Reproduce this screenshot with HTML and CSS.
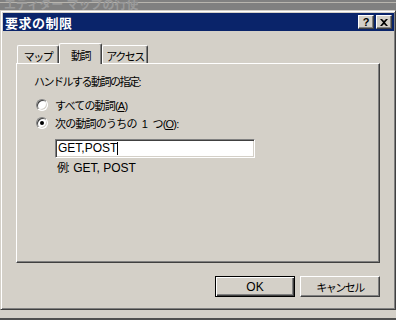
FILE: index.html
```html
<!DOCTYPE html>
<html lang="ja">
<head>
    <meta charset="UTF-8" />
    <title>要求の制限</title>
    <link rel="stylesheet" href="styles.css">
</head>
<body>
    <div class="behind">
        <span class="ghost-title">エディター マップの行使</span>
    </div>

    <div class="window">
        <div class="titlebar">
            <span class="title">要求の制限</span>
            <div class="caption-buttons">
                <span class="cap-btn">?</span>
                <span class="cap-btn">
                    <svg width="8" height="7" viewBox="0 0 8 7">
                        <path d="M0 0h2l2 2 2-2h2L5 3.5 8 7H6L4 5 2 7H0l3-3.5z" fill="#000"/>
                    </svg>
                </span>
            </div>
        </div>

        <div class="client">
            <div class="tabs">
                <div class="tab ja tab-map">マップ</div>
                <div class="tab ja tab-verbs active">動詞</div>
                <div class="tab ja tab-access">アクセス</div>
            </div>

            <div class="panel">
                <div class="label ja">ハンドルする動詞の指定:</div>
                <div class="option">
                    <span class="radio"></span>
                    <span class="ja loose">すべての動詞(<u>A</u>)</span>
                </div>
                <div class="option">
                    <span class="radio checked"></span>
                    <span class="ja loose">次の動詞のうちの 1 つ(<u>O</u>):</span>
                </div>
                <div class="textbox">GET,POST<span class="caret"></span></div>
                <div class="hint"><span class="ja">例</span>: GET, POST</div>
            </div>

            <div class="actions">
                <button class="btn default">OK</button>
                <button class="btn"><span class="ja">キャンセル</span></button>
            </div>
        </div>
    </div>

    <div class="below"></div>
</body>
</html>
```

FILE: styles.css
```css
:root {
    --face: #d4d0c8;
    --shadow: #808080;
    --dark: #404040;
    --light: #ffffff;
    --title: #0a246a;
}
body {
    margin: 0;
    width: 396px;
    height: 320px;
    overflow: hidden;
    background-color: var(--face);
    font-family: "Liberation Sans", "Noto Sans CJK JP", sans-serif;
    font-size: 12px;
    color: #000;
}
/* Japanische Texte schmaler setzen (wie MS UI Gothic) */
.ja {
    font-size: 11px;
    letter-spacing: -1.5px;
    white-space: nowrap;
}
.ja.loose {
    letter-spacing: -0.8px;
    word-spacing: 3px;
}

/* Fenster dahinter (nur Titelrand sichtbar) */
.behind {
    height: 10px;
    overflow: hidden;
    background: linear-gradient(#808080 0 2px, #b8b5ae 2px 3px, #808080 3px);
}
.ghost-title {
    display: block;
    margin-top: -2px;
    padding-left: 4px;
    font-size: 12px;
    font-weight: bold;
    line-height: 14px;
    color: #9a9a9a;
    white-space: nowrap;
}

.window {
    box-sizing: border-box;
    width: 396px;
    height: 300px;
    padding: 1px;
    border: 1px solid;
    border-color: var(--face) var(--dark) var(--dark) var(--face);
    box-shadow: inset 1px 1px var(--light), inset -1px -1px var(--shadow);
    background-color: var(--face);
}

.titlebar {
    height: 18px;
    margin: 1px 0 0 1px;
    padding: 0 2px;
    background-color: var(--title);
    color: #fff;
    display: flex;
    align-items: center;
    justify-content: space-between;
}
.title {
    font-size: 13px;
    font-weight: bold;
    letter-spacing: 0.5px;
}
.caption-buttons {
    display: flex;
    gap: 2px;
}
.cap-btn {
    box-sizing: border-box;
    width: 16px;
    height: 14px;
    background-color: var(--face);
    border: 1px solid;
    border-color: var(--light) var(--dark) var(--dark) var(--light);
    box-shadow: inset -1px -1px var(--shadow);
    color: #000;
    font-size: 11px;
    font-weight: bold;
    line-height: 12px;
    display: flex;
    align-items: center;
    justify-content: center;
}

.client {
    padding: 12px 14px 0 14px;
}

.tabs {
    display: flex;
    align-items: flex-end;
    height: 20px;
    padding-left: 1px;
}
.tab {
    box-sizing: border-box;
    height: 18px;
    padding-top: 2px;
    text-align: center;
    border-top: 1px solid var(--light);
    border-left: 1px solid var(--light);
    border-right: 1px solid var(--dark);
    border-radius: 2px 2px 0 0;
    box-shadow: inset -1px 0 var(--shadow);
    background-color: var(--face);
}
.tab-map { width: 42px; }
.tab-verbs { width: 43px; }
.tab-access { width: 46px; }
.tab.active {
    height: 21px;
    margin-bottom: -1px;
    padding-top: 3px;
    position: relative;
    z-index: 1;
}

.panel {
    box-sizing: border-box;
    width: 364px;
    height: 200px;
    padding: 11px 0 0 17px;
    border: 1px solid;
    border-color: var(--light) var(--dark) var(--dark) var(--light);
    box-shadow: inset -1px -1px var(--shadow);
}
.label {
    line-height: 14px;
}
.option {
    display: flex;
    align-items: center;
    gap: 7px;
    height: 14px;
    margin-top: 9px;
    padding-left: 2px;
}
.option + .option {
    margin-top: 4px;
}
.radio {
    box-sizing: border-box;
    width: 12px;
    height: 12px;
    border-radius: 50%;
    background-color: #fff;
    border: 1px solid;
    border-color: var(--shadow) var(--light) var(--light) var(--shadow);
    box-shadow: inset 1px 1px var(--dark), inset -1px -1px var(--face);
    position: relative;
}
.radio.checked::after {
    content: "";
    position: absolute;
    left: 3px;
    top: 3px;
    width: 4px;
    height: 4px;
    border-radius: 50%;
    background-color: #000;
}

.textbox {
    box-sizing: border-box;
    width: 200px;
    height: 19px;
    margin: 9px 0 0 21px;
    padding: 2px 0 0 2px;
    background-color: #fff;
    border: 1px solid;
    border-color: var(--shadow) var(--light) var(--light) var(--shadow);
    box-shadow: inset 1px 1px var(--dark), inset -1px -1px var(--face);
    line-height: 13px;
    display: flex;
    align-items: flex-start;
}
.caret {
    display: inline-block;
    width: 1px;
    height: 13px;
    background-color: #000;
}
.hint {
    margin: 3px 0 0 23px;
    line-height: 14px;
}

.actions {
    display: flex;
    justify-content: flex-end;
    gap: 5px;
    width: 364px;
    margin-top: 13px;
}
.btn {
    box-sizing: border-box;
    width: 80px;
    height: 21px;
    padding: 0;
    font-family: inherit;
    font-size: 12px;
    background-color: var(--face);
    color: #000;
    border: 1px solid;
    border-color: var(--light) var(--dark) var(--dark) var(--light);
    box-shadow: inset -1px -1px var(--shadow);
}
.btn.default {
    border-color: #000;
    box-shadow: inset 1px 1px var(--light), inset -1px -1px var(--dark), inset -2px -2px var(--shadow);
}

.below {
    box-sizing: border-box;
    height: 10px;
    border-bottom: 2px solid #505050;
}
```
